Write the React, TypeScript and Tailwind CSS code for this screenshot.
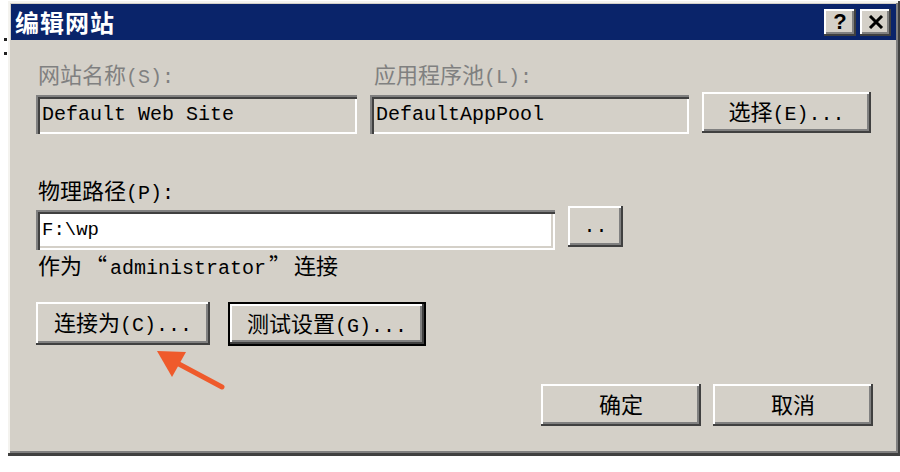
import React from "react";

const FONT = { fontFamily: '"Liberation Mono", "Noto Sans CJK SC", monospace' };
const CJK = { fontFamily: '"Noto Sans CJK SC", "Liberation Sans", sans-serif' };

const raised =
  "bg-[#d4d0c8] shadow-[inset_-2px_-2px_0_#404040,inset_2px_2px_0_#ffffff,inset_-4px_-4px_0_#808080]";
const sunken =
  "shadow-[inset_2px_2px_0_#808080,inset_4px_4px_0_#404040,inset_-2px_-2px_0_#ffffff,inset_-4px_-4px_0_#d4d0c8]";

function C({ children }: { children: React.ReactNode }) {
  return (
    <span className="text-[22px]" style={CJK}>
      {children}
    </span>
  );
}

function Btn({ children, className = "" }: { children: React.ReactNode; className?: string }) {
  return (
    <div className={`${raised} flex items-center justify-center text-[20px] text-black ${className}`} style={FONT}>
      <span className="leading-[26px]">{children}</span>
    </div>
  );
}

export default function App() {
  return (
    <div className="relative w-[900px] h-[472px] bg-white overflow-hidden">
      <div className="absolute left-[4px] top-[38px] w-[3px] h-[3px] bg-[#222]" />
      <div className="absolute left-[4px] top-[52px] w-[3px] h-[3px] bg-[#222]" />
      <div className="ml-[8px] mt-[1px] w-[892px] h-[455px] bg-[#d4d0c8] p-[3px] shadow-[inset_-2px_-3px_0_#404040,inset_2px_2px_0_#f4f3ef,inset_-4px_-5px_0_#808080]">
        {/* title bar */}
        <div className="h-[36px] bg-[#0a246a] flex items-center justify-between pl-[4px] pr-[5px] mr-[1px]">
          <span className="text-white font-bold text-[24px] leading-none tracking-[1px]" style={CJK}>
            编辑网站
          </span>
          <div className="flex gap-[4px]">
            <div className={`${raised} w-[32px] h-[27px] flex items-center justify-center text-[22px] font-bold leading-none`} style={{ fontFamily: '"Liberation Sans", sans-serif' }}>
              ?
            </div>
            <div className={`${raised} w-[31px] h-[27px] flex items-center justify-center`}>
              <svg width="16" height="14" viewBox="0 0 16 14">
                <path d="M2 1 L14 13 M14 1 L2 13" stroke="#000" strokeWidth="3" />
              </svg>
            </div>
          </div>
        </div>

        {/* content */}
        <div className="pl-[25px] pr-[21px] leading-[26px]" style={FONT}>
          <div className="flex mt-[22px] h-[26px] items-center text-[20px] text-[#808080]">
            <div className="w-[334px] pl-[2px]">
              <span>
                <C>网站名称</C>(S):
              </span>
            </div>
            <div className="pl-[4px]">
              <span>
                <C>应用程序池</C>(L):
              </span>
            </div>
          </div>
          <div className="flex mt-[4px] items-start gap-[13px]">
            <div className={`${sunken} w-[321px] h-[39px] mt-[3px] bg-[#d4d0c8] flex items-center pl-[6px] text-[20px] text-black`}>
              Default Web Site
            </div>
            <div className={`${sunken} w-[319px] h-[39px] mt-[3px] bg-[#d4d0c8] flex items-center pl-[6px] text-[20px] text-black`}>
              DefaultAppPool
            </div>
            <Btn className="w-[169px] h-[41px]">
              <C>选择</C>(E)...
            </Btn>
          </div>

          <div className="mt-[44px] h-[26px] flex items-center pl-[2px] text-[20px] text-black">
            <span>
              <C>物理路径</C>(P):
            </span>
          </div>
          <div className="flex mt-[2px] items-start gap-[13px]">
            <div className={`${sunken} w-[519px] h-[40px] mt-[4px] bg-white flex items-center pl-[6px] text-[19px] text-black`}>
              F:\wp
            </div>
            <Btn className="w-[55px] h-[41px]">..</Btn>
          </div>
          <div className="mt-[3px] h-[26px] flex items-center pl-[2px] text-[20px] text-black">
            <span>
              <C>作为</C>
              <span className="mx-[3px]">
                <C>“</C>
              </span>
              administrator
              <span className="mx-[3px]">
                <C>”</C>
              </span>
              <C>连接</C>
            </span>
          </div>

          <div className="flex mt-[23px] gap-[18px] items-start">
            <Btn className="w-[174px] h-[43px]">
              <C>连接为</C>(C)...
            </Btn>
            <div className="border-2 border-black">
              <Btn className="w-[194px] h-[40px]">
                <C>测试设置</C>(G)...
              </Btn>
            </div>
          </div>

          <div className="flex justify-end mt-[38px] gap-[12px] pr-[3px]">
            <Btn className="w-[160px] h-[42px]">
              <C>确定</C>
            </Btn>
            <Btn className="w-[160px] h-[42px]">
              <C>取消</C>
            </Btn>
          </div>
        </div>
      </div>

      <svg className="absolute left-0 top-0" width="900" height="472" style={{ pointerEvents: "none" }}>
        <line x1="177" y1="363" x2="222" y2="387" stroke="#ef5a2b" strokeWidth="5" strokeLinecap="round" />
        <polygon points="157,351 186,352 172,377" fill="#ef5a2b" />
      </svg>
    </div>
  );
}
